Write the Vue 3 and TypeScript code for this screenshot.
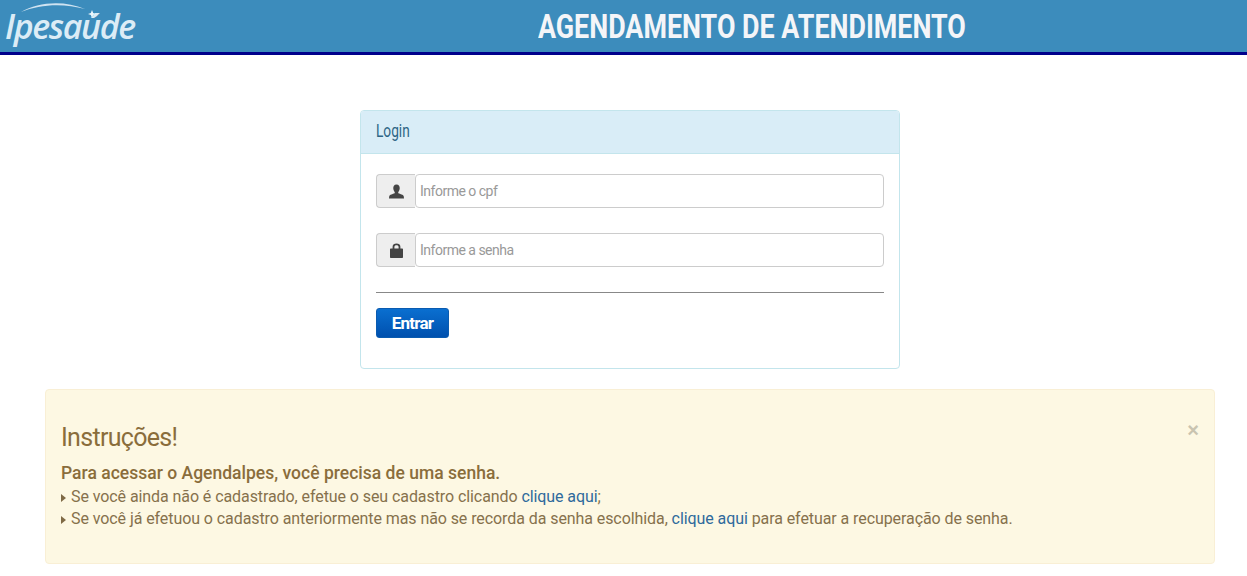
<script setup lang="ts">
const fields = [
  { id: 'cpf', placeholder: 'Informe o cpf', icon: 'user' },
  { id: 'senha', placeholder: 'Informe a senha', icon: 'lock' },
]
</script>

<template>
  <div class="page">
    <header class="topo">
      <div class="logo">
        <svg class="logo-arc" width="100" height="22" viewBox="0 0 100 22" aria-hidden="true">
          <path d="M21 11 C38 1 64 -1 85 8 C64 2 40 3 21 11 Z" fill="#cfe3f1" />
          <path d="M92 9 L93.2 12 L96 13 L93.2 14 L92 17 L90.8 14 L88 13 L90.8 12 Z" fill="#eef6fb" />
        </svg>
        <span class="logo-text">Ipesaúde</span>
      </div>
      <h1 class="titulo">AGENDAMENTO DE ATENDIMENTO</h1>
    </header>

    <section class="panel">
      <div class="panel-heading"><span class="panel-title">Login</span></div>
      <div class="panel-body">
        <div v-for="f in fields" :key="f.id" class="input-group">
          <span class="addon">
            <svg v-if="f.icon === 'user'" width="15" height="15" viewBox="0 0 14 14" aria-hidden="true">
              <path d="M7 0.5 C9.2 0.5 10.2 2.2 10 4.2 C9.9 5.6 9.3 6.8 8.6 7.5 L8.7 8.7 C10.5 9.5 13.5 10 13.8 11.6 L14 13.5 L0 13.5 L0.2 11.6 C0.5 10 3.5 9.5 5.3 8.7 L5.4 7.5 C4.7 6.8 4.1 5.6 4 4.2 C3.8 2.2 4.8 0.5 7 0.5 Z" fill="#444" />
            </svg>
            <svg v-else width="13" height="15" viewBox="0 0 13 15" aria-hidden="true">
              <path d="M2.6 5.5 V3.8 C2.6 1.7 4.3 0.6 6.5 0.6 C8.7 0.6 10.4 1.7 10.4 3.8 V5.5 H12 C12.6 5.5 13 5.9 13 6.5 V14 C13 14.6 12.6 15 12 15 H1 C0.4 15 0 14.6 0 14 V6.5 C0 5.9 0.4 5.5 1 5.5 Z M4.4 5.5 H8.6 V3.9 C8.6 2.8 7.7 2.2 6.5 2.2 C5.3 2.2 4.4 2.8 4.4 3.9 Z" fill="#444" fill-rule="evenodd" />
            </svg>
          </span>
          <input class="campo" type="text" :placeholder="f.placeholder" />
        </div>
        <hr class="divisor" />
        <button class="entrar" type="button">Entrar</button>
      </div>
    </section>

    <section class="alerta">
      <span class="fechar">×</span>
      <h4 class="alerta-titulo">Instruções!</h4>
      <p class="alerta-forte">Para acessar o Agendalpes, você precisa de uma senha.</p>
      <p class="linha"><span class="seta"></span>Se você ainda não é cadastrado, efetue o seu cadastro clicando <a href="#">clique aqui</a>;</p>
      <p class="linha"><span class="seta"></span>Se você já efetuou o cadastro anteriormente mas não se recorda da senha escolhida, <a href="#">clique aqui</a> para efetuar a recuperação de senha.</p>
    </section>
  </div>
</template>

<style>
body {
  background: #fff;
}
</style>

<style scoped>
.page {
  width: 1247px;
  height: 576px;
  overflow: hidden;
  font-family: Roboto, "Liberation Sans", sans-serif;
}

.topo {
  display: flex;
  align-items: center;
  height: 52px;
  background: #3c8cbc;
  border-bottom: 3px solid #00008b;
}

.logo {
  position: relative;
  width: 538px;
  flex: none;
  padding-left: 5px;
  box-sizing: border-box;
}

.logo-text {
  font-family: "Open Sans", sans-serif;
  font-style: italic;
  font-weight: 600;
  font-size: 34px;
  letter-spacing: -1.4px;
  color: #dcecf6;
}

.logo-arc {
  position: absolute;
  left: 0;
  top: -2px;
}

.titulo {
  margin: 0;
  font-size: 34px;
  font-weight: 700;
  color: #f4f5f8;
  white-space: nowrap;
  transform: scaleX(0.79);
  transform-origin: left center;
}

.panel {
  width: 540px;
  height: 259px;
  box-sizing: border-box;
  margin: 55px 0 0 360px;
  border: 1px solid #c3e5ec;
  border-radius: 4px;
}

.panel-heading {
  height: 42px;
  line-height: 40px;
  padding: 0 15px;
  background: #d9edf7;
  border-bottom: 1px solid #c3e5ec;
  color: #2d6585;
  font-size: 18px;
  border-radius: 3px 3px 0 0;
}

.panel-title {
  display: inline-block;
  transform: scaleX(0.76);
  transform-origin: left center;
}

.panel-body {
  padding: 20px 15px;
}

.input-group {
  display: flex;
  height: 34px;
  margin-bottom: 25px;
}

.addon {
  display: flex;
  align-items: center;
  justify-content: center;
  width: 39px;
  flex: none;
  box-sizing: border-box;
  background: #eee;
  border: 1px solid #ccc;
  border-right: 0;
  border-radius: 4px 0 0 4px;
}

.campo {
  flex: 1;
  min-width: 0;
  box-sizing: border-box;
  padding: 0 4px;
  border: 1px solid #ccc;
  border-radius: 4px;
  font-family: inherit;
  font-size: 14px;
  letter-spacing: -0.5px;
  outline: none;
}

.campo::placeholder {
  color: #999;
  opacity: 1;
}

.divisor {
  margin: 0 0 15px;
  border: 0;
  border-top: 1px solid #888;
}

.entrar {
  display: block;
  width: 73px;
  height: 30px;
  padding: 0;
  border: 1px solid #0a5bb0;
  border-radius: 3px;
  background: linear-gradient(#0a6fd0, #0050ae);
  color: #fff;
  font-family: inherit;
  font-size: 17px;
  font-weight: 700;
  letter-spacing: -0.8px;
}

.alerta {
  position: relative;
  width: 1170px;
  height: 175px;
  box-sizing: border-box;
  margin: 20px 0 0 45px;
  padding: 33px 15px 0;
  background: #fdf8e3;
  border: 1px solid #f9efd5;
  border-radius: 4px;
  color: #8a6d3b;
}

.fechar {
  position: absolute;
  top: 30px;
  right: 15px;
  font-family: "Liberation Sans", sans-serif;
  font-size: 20px;
  line-height: 20px;
  font-weight: 700;
  color: #c9c4b0;
}

.alerta-titulo {
  margin: 0 0 8px;
  font-size: 25px;
  font-weight: 400;
  line-height: 30px;
  letter-spacing: -0.7px;
}

.alerta-forte {
  margin: 0 0 1px;
  font-size: 17.5px;
  font-weight: 500;
  line-height: 24px;
  letter-spacing: 0.01px;
}

.linha {
  margin: 0;
  font-size: 16px;
  line-height: 22px;
  letter-spacing: -0.08px;
  color: #86714c;
}

.seta {
  display: inline-block;
  width: 0;
  height: 0;
  margin: 0 5px 0 0;
  border-left: 5px solid #7f6a45;
  border-top: 4.5px solid transparent;
  border-bottom: 4.5px solid transparent;
}

.linha a {
  color: #2f6a9c;
  text-decoration: none;
}
</style>
